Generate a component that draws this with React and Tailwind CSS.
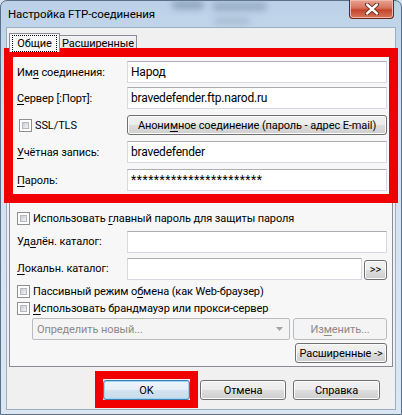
import React from 'react'

const U = ({ children }) => <span className="underline underline-offset-2">{children}</span>

function Field({ value = '', className = '' }) {
  return (
    <div
      className={`h-[22px] bg-white border border-[#d6d9df] border-t-[#abadb3] flex items-center pl-[3px] text-black text-[12px] tracking-[-0.2px] whitespace-nowrap overflow-hidden ${className}`}
    >
      {value}
    </div>
  )
}

function Button({ children, className = '', def = false }) {
  const look = def
    ? 'border-[#3c7fb1] shadow-[inset_0_0_0_1px_#9fd3f1] bg-[linear-gradient(#eef5fa_0%,#e4eef6_50%,#d3e3ef_50%,#c7dbea_100%)]'
    : 'border-[#707070] shadow-[inset_0_0_0_1px_#fcfcfc] bg-[linear-gradient(#f2f2f2_0%,#ebebeb_50%,#dddddd_50%,#cfcfcf_100%)]'
  return (
    <div className={`h-[20px] rounded-[3px] border flex items-center justify-center text-black whitespace-nowrap ${look} ${className}`}>
      {children}
    </div>
  )
}

function Check({ children, className = '' }) {
  return (
    <div className={`flex items-center ${className}`}>
      <div className="w-[13px] h-[13px] border border-[#8e8f8f] bg-white p-[2px] shrink-0">
        <div className="w-full h-full bg-[linear-gradient(135deg,#c9cdd2,#f4f4f4)] border border-[#b5b9be]" />
      </div>
      <span className="ml-[3px] whitespace-nowrap">{children}</span>
    </div>
  )
}

function Row({ label, children, className = '' }) {
  return (
    <div className={`flex items-center ${className}`}>
      <div className="w-[110px] shrink-0 whitespace-nowrap">{label}</div>
      <div className="flex-1 flex items-center">{children}</div>
    </div>
  )
}

export default function App() {
  return (
    <div className="relative w-[402px] h-[415px] overflow-hidden font-['Roboto',sans-serif] text-[11px] tracking-[-0.1px] leading-none text-black bg-[#d3e1ef]">
      {/* window frame */}
      <div className="absolute inset-0 rounded-t-[7px] border border-[#5b7189] bg-[linear-gradient(180deg,#bcd1e8_0%,#d2e1f0_30%,#dbe7f3_100%)]" />
      {/* glass blur behind the title */}
      <div className="absolute left-[172px] top-[1px] w-[32px] h-[8px] rounded-full bg-[#6f86a0] blur-[3px] opacity-60" />
      <div className="absolute left-[212px] top-[2px] w-[55px] h-[9px] rounded-full bg-[#7e94ad] blur-[3px] opacity-55" />
      <div className="absolute left-[214px] top-[18px] w-[36px] h-[6px] rounded-full bg-[#8a9fb6] blur-[3px] opacity-50" />

      <div className="relative flex flex-col h-full">
        {/* title bar */}
        <div className="h-[27px] flex items-start">
          <div className="pl-[8px] pt-[9px] text-[11.5px] text-black">Настройка FTP-соединения</div>
          <div className="ml-auto mr-[8px] mt-0 w-[45px] h-[19px] rounded-b-[4px] border border-t-0 border-[#6e2415] bg-[linear-gradient(#e8a493_0%,#d6725c_45%,#c4452b_55%,#d8755c_100%)] shadow-[inset_0_0_0_1px_#f1b9aa] flex items-center justify-center">
            <svg width="14" height="12" viewBox="0 0 14 12">
              <path d="M2 1.5 L12 10.5 M12 1.5 L2 10.5" stroke="#5a2418" strokeWidth="4.2" strokeLinecap="round" />
              <path d="M2 1.5 L12 10.5 M12 1.5 L2 10.5" stroke="#ffffff" strokeWidth="2.4" strokeLinecap="round" />
            </svg>
          </div>
        </div>

        {/* client area */}
        <div className="mx-[6px] h-[383px] bg-[#f0f0f0] border border-[#9aaec4] flex flex-col">
          {/* tabs */}
          <div className="h-[23px] flex items-end pl-[2px]">
            <div className="relative z-10 -mb-px h-[19px] w-[51px] border border-b-0 border-[#898c95] bg-[#f7f7f7] flex items-center justify-center">
              <span className="px-[4px] py-[2px] border border-dotted border-black">Общие</span>
            </div>
            <div className="h-[16px] w-[77px] border border-l-0 border-b-0 border-[#898c95] bg-[linear-gradient(#f3f3f3,#e2e2e2)] flex items-center justify-center">
              Расширенные
            </div>
          </div>

          {/* tab page */}
          <div className="mx-[2px] h-[316px] border border-[#898c95] bg-[#f7f7f7] pt-[9px] pl-[7px] pr-[5px]">
            <Row label={<>Им<U>я</U> соединения:</>} className="h-[22px]">
              <Field value="Народ" className="w-full" />
            </Row>
            <Row label={<><U>С</U>ервер [:Порт]:</>} className="h-[22px] mt-[4px]">
              <Field value="bravedefender.ftp.narod.ru" className="w-full" />
            </Row>
            <Row label={<Check className="ml-[2px]">SSL/TLS</Check>} className="h-[22px] mt-[5px]">
              <Button className="w-full">Анони<U>м</U>ное соединение (пароль - адрес E-mail)</Button>
            </Row>
            <Row label={<><U>У</U>чётная запись:</>} className="h-[22px] mt-[5px]">
              <Field value="bravedefender" className="w-full" />
            </Row>
            <Row label={<><U>П</U>ароль:</>} className="h-[22px] mt-[6px]">
              <Field value={<span className="tracking-[0.55px]">***********************</span>} className="w-full" />
            </Row>

            <Check className="h-[20px] mt-[17px]">
              Использовать <U>г</U>лавный пароль для защиты пароля
            </Check>
            <Row label={<>Уд<U>а</U>лён. каталог:</>} className="h-[21px] mt-[3px]">
              <Field className="w-full h-[21px]" />
            </Row>
            <Row label={<><U>Л</U>окальн. каталог:</>} className="h-[21px] mt-[6px]">
              <Field className="flex-1 h-[21px]" />
              <Button className="ml-[2px] w-[23px] h-[19px] mt-[2px]">&gt;&gt;</Button>
            </Row>
            <Check className="h-[16px] mt-[4px]">
              Пассивный режим о<U>б</U>мена (как Web-браузер)
            </Check>
            <Check className="h-[16px] mt-[1px]">
              <U>И</U>спользовать брандмауэр или прокси-сервер
            </Check>
            <div className="flex mt-[2px] pl-[15px] h-[22px]">
              <div className="w-[258px] h-[22px] border border-[#b8bcc0] rounded-[2px] bg-[#f4f4f4] flex items-center pl-[4px] text-[#8a8a8a]">
                Определить новый...
                <svg className="ml-auto mr-[6px]" width="7" height="4" viewBox="0 0 7 4">
                  <path d="M0 0 H7 L3.5 4 Z" fill="#a3a3a3" />
                </svg>
              </div>
              <div className="ml-[3px] flex-1 h-[22px] border border-[#b8bcc0] rounded-[3px] bg-[#f4f4f4] flex items-center justify-center text-[#8a8a8a]">
                Из<U>м</U>енить...
              </div>
            </div>
            <div className="flex justify-end mt-[3px]">
              <Button className="w-[92px]">Расширенные -&gt;</Button>
            </div>
          </div>

          {/* dialog buttons */}
          <div className="flex mt-[13px] pl-[96px]">
            <Button def className="w-[87px]">OK</Button>
            <Button className="w-[86px] ml-[10px]">Отмена</Button>
            <Button className="w-[87px] ml-[7px]">Справка</Button>
          </div>
        </div>
      </div>

      {/* red annotation frames */}
      <div className="absolute left-[4px] top-[48px] w-[394px] h-[155px] border-[9px] border-[#f00000]" />
      <div className="absolute left-[95px] top-[371px] w-[103px] h-[37px] border-[8px] border-[#f00000]" />
    </div>
  )
}
